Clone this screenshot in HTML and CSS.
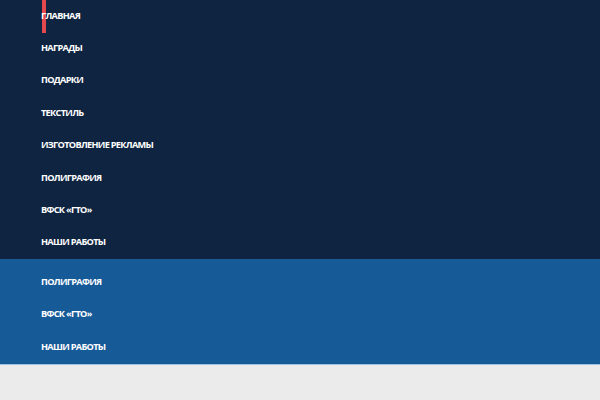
FILE: index.html
```html
<!DOCTYPE html>
<html lang="ru">
<head>
<meta charset="utf-8">
<link rel="stylesheet" href="styles.css">
</head>
<body>
<nav class="main-nav">
  <ul class="menu">
    <li class="item active"><a href="#">Главная</a></li>
    <li class="item"><a href="#">Награды</a></li>
    <li class="item"><a href="#">Подарки</a></li>
    <li class="item"><a href="#">Текстиль</a></li>
    <li class="item"><a href="#">Изготовление рекламы</a></li>
    <li class="item"><a href="#">Полиграфия</a></li>
    <li class="item"><a href="#">ВФСК «ГТО»</a></li>
    <li class="item"><a href="#">Наши работы</a></li>
  </ul>
</nav>
<nav class="sub-nav">
  <ul class="menu">
    <li class="item"><a href="#">Полиграфия</a></li>
    <li class="item"><a href="#">ВФСК «ГТО»</a></li>
    <li class="item"><a href="#">Наши работы</a></li>
  </ul>
</nav>
<div class="rest"></div>
</body>
</html>
```
FILE: styles.css
```css
html, body {
  margin: 0;
  padding: 0;
  background: #ebebeb;
  font-family: "Open Sans", "Liberation Sans", sans-serif;
}
.menu {
  list-style: none;
  margin: 0;
  padding: 0;
}
.item {
  height: 32.4px;
  display: flex;
  align-items: center;
  padding-left: 41px;
  position: relative;
}
.item a {
  color: #ffffff;
  text-decoration: none;
  text-transform: uppercase;
  font-weight: 700;
  font-size: 9.2px;
  letter-spacing: -0.7px;
  position: relative;
  top: -1px;
}
.item.active::before {
  content: "";
  position: absolute;
  left: 42px;
  top: 0;
  width: 4px;
  height: 33px;
  background: #e5484d;
}
.item.active a {
  z-index: 1;
}
.main-nav {
  background: #0e2440;
}
.sub-nav {
  background: #175a98;
  padding-top: 7px;
  padding-bottom: 1px;
  border-bottom: 1px solid #9cc3e6;
}
.rest {
  height: 40px;
}
```
